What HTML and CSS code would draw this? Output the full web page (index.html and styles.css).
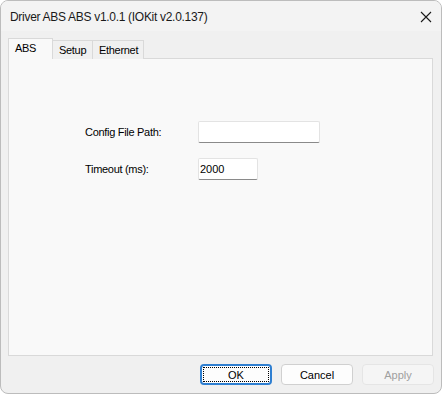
FILE: index.html
```html
<!DOCTYPE html>
<html>
<head>
<meta charset="utf-8">
<link rel="stylesheet" href="styles.css">
</head>
<body>
<div class="window">
  <div class="titlebar">
    <span class="title">Driver ABS ABS v1.0.1 (IOKit v2.0.137)</span>
    <svg class="close" width="12" height="12" viewBox="0 0 12 12"><path d="M1 1 L11 11 M11 1 L1 11" stroke="#1a1a1a" stroke-width="1.1" fill="none"/></svg>
  </div>
  <div class="tabs">
    <div class="tab tab-active">ABS</div>
    <div class="tab tab-setup">Setup</div>
    <div class="tab tab-eth">Ethernet</div>
  </div>
  <div class="panel">
    <div class="form">
      <div class="row">
        <span class="label">Config File Path:</span>
        <div class="input input-wide"></div>
      </div>
      <div class="row row2">
        <span class="label">Timeout (ms):</span>
        <div class="input input-short">2000</div>
      </div>
    </div>
  </div>
  <div class="buttons">
    <div class="btn btn-ok"><span class="focus">OK</span></div>
    <div class="btn btn-cancel">Cancel</div>
    <div class="btn btn-apply">Apply</div>
  </div>
</div>
</body>
</html>
```

FILE: styles.css
```css
html, body {
  margin: 0;
  padding: 0;
  background: #ffffff;
}
.window {
  width: 442px;
  height: 394px;
  box-sizing: border-box;
  border: 1px solid #bcbcbc;
  border-radius: 8px;
  background: #f0f0f0;
  overflow: hidden;
  font-family: "Liberation Sans", Arial, sans-serif;
  font-size: 11px;
  color: #000;
}
.titlebar {
  height: 30px;
  display: flex;
  align-items: center;
  justify-content: space-between;
  padding: 0 9px 0 9px;
  background: #f3f3f3;
}
.title {
  font-family: "Liberation Sans", Arial, sans-serif;
  font-size: 12px;
  letter-spacing: -0.3px;
  color: #1a1a1a;
  padding-top: 1px;
}
.close {
  display: block;
  margin-top: 1px;
}
.tabs {
  display: flex;
  align-items: flex-start;
  height: 21px;
  margin: 7px 0 0 7px;
  letter-spacing: -0.3px;
}
.tab {
  box-sizing: border-box;
  border: 1px solid #d9d9d9;
  border-bottom: none;
  background: #f0f0f0;
  height: 19px;
  margin-top: 2px;
  padding: 3px 0 0 6px;
  line-height: 13px;
}
.tab-active {
  position: relative;
  z-index: 1;
  height: 21px;
  margin-top: 0;
  width: 45px;
  background: #f9f9f9;
  padding: 3px 0 0 6px;
}
.tab-setup {
  width: 40px;
  border-left: none;
}
.tab-eth {
  width: 51px;
  border-left: none;
}
.panel {
  margin: -1px 0 0 7px;
  width: 425px;
  height: 298px;
  box-sizing: border-box;
  border: 1px solid #d9d9d9;
  background: #f9f9f9;
}
.form {
  padding: 62px 0 0 76px;
}
.row {
  display: flex;
  align-items: center;
}
.row2 {
  margin-top: 15px;
}
.label {
  width: 113px;
  letter-spacing: -0.3px;
}
.input {
  box-sizing: border-box;
  height: 22px;
  background: #ffffff;
  border: 1px solid #e3e3e3;
  border-bottom: 1px solid #8a8a8a;
  border-radius: 2px;
  padding: 0 0 0 1px;
  line-height: 20px;
  font-size: 11px;
}
.input-wide {
  width: 122px;
}
.input-short {
  width: 60px;
}
.buttons {
  display: flex;
  justify-content: flex-end;
  gap: 9px;
  margin-top: 8px;
  padding-right: 7px;
}
.btn {
  box-sizing: border-box;
  width: 72px;
  height: 21px;
  border: 1px solid #d0d0d0;
  border-radius: 4px;
  background: #fdfdfd;
  display: flex;
  align-items: center;
  justify-content: center;
  font-size: 11px;
}
.btn-ok {
  border: 2px solid #2f7fd1;
  padding: 1px;
}
.focus {
  flex: 1;
  align-self: stretch;
  display: flex;
  align-items: center;
  justify-content: center;
  border: 1px dotted #000;
}
.btn-apply {
  background: #f5f5f5;
  border-color: #e5e5e5;
  color: #a0a0a0;
}
```
